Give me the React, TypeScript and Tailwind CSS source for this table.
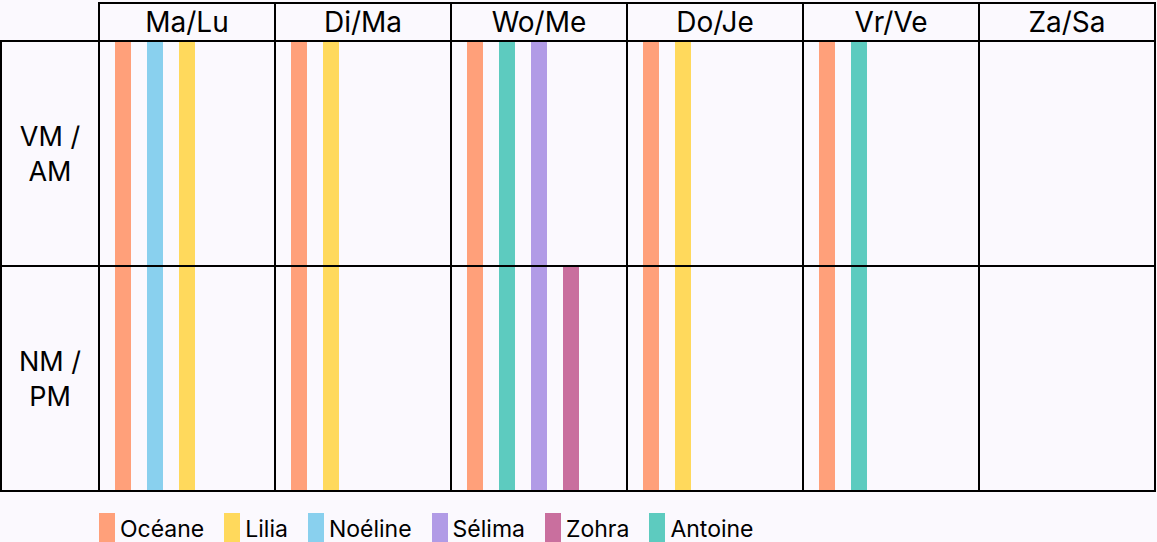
const C = {
  oceane: "bg-[#ffa07a]",
  lilia: "bg-[#ffd95c]",
  noeline: "bg-[#89d0ee]",
  selima: "bg-[#b19be6]",
  zohra: "bg-[#c96f9e]",
  antoine: "bg-[#5dcbbf]",
};

const days = ["Ma/Lu", "Di/Ma", "Wo/Me", "Do/Je", "Vr/Ve", "Za/Sa"];

const am: (string | null)[][] = [
  [C.oceane, C.noeline, C.lilia],
  [C.oceane, C.lilia],
  [C.oceane, C.antoine, C.selima],
  [C.oceane, C.lilia],
  [C.oceane, C.antoine],
  [],
];

const pm: (string | null)[][] = [
  [C.oceane, C.noeline, C.lilia],
  [C.oceane, C.lilia],
  [C.oceane, C.antoine, C.selima, C.zohra],
  [C.oceane, C.lilia],
  [C.oceane, C.antoine],
  [],
];

const legend = [
  { name: "Océane", c: C.oceane },
  { name: "Lilia", c: C.lilia },
  { name: "Noéline", c: C.noeline },
  { name: "Sélima", c: C.selima },
  { name: "Zohra", c: C.zohra },
  { name: "Antoine", c: C.antoine },
];

function Bars({ bars }: { bars: (string | null)[] }) {
  return (
    <div className="flex h-[223px] gap-4 pl-[15px]">
      {bars.map((b, i) => (
        <div key={i} className={`w-4 h-full ${b ?? ""}`} />
      ))}
    </div>
  );
}

function Row({ label, data }: { label: [string, string]; data: (string | null)[][] }) {
  return (
    <tr>
      <td className="border-2 border-black text-center align-middle text-[27px] leading-[35px] p-0">
        <div>{label[0]}</div>
        <div>{label[1]}</div>
      </td>
      {data.map((bars, i) => (
        <td key={i} className="border-2 border-black p-0 align-top">
          <Bars bars={bars} />
        </td>
      ))}
    </tr>
  );
}

export default function App() {
  return (
    <div
      className="w-[1157px] h-[542px] overflow-hidden bg-[#fbf9fe] text-black pt-[2px]"
      style={{ fontFamily: "Inter, 'Noto Sans', sans-serif" }}
    >
      <table className="border-collapse table-fixed">
        <colgroup>
          <col className="w-[98px]" />
          {days.map((d) => (
            <col key={d} className="w-[176px]" />
          ))}
        </colgroup>
        <thead>
          <tr>
            <th className="p-0" />
            {days.map((d) => (
              <th
                key={d}
                className="border-2 border-black h-[38px] p-0 font-normal text-[28px] leading-none text-center"
              >
                {d}
              </th>
            ))}
          </tr>
        </thead>
        <tbody>
          <Row label={["VM /", "AM"]} data={am} />
          <Row label={["NM /", "PM"]} data={pm} />
        </tbody>
      </table>
      <div className="flex items-center ml-[99px] mt-[20px] text-[23px]">
        {legend.map((l) => (
          <div key={l.name} className="flex items-center mr-[20px]">
            <div className={`w-4 h-8 ${l.c}`} />
            <span className="ml-[5px]">{l.name}</span>
          </div>
        ))}
      </div>
    </div>
  );
}
